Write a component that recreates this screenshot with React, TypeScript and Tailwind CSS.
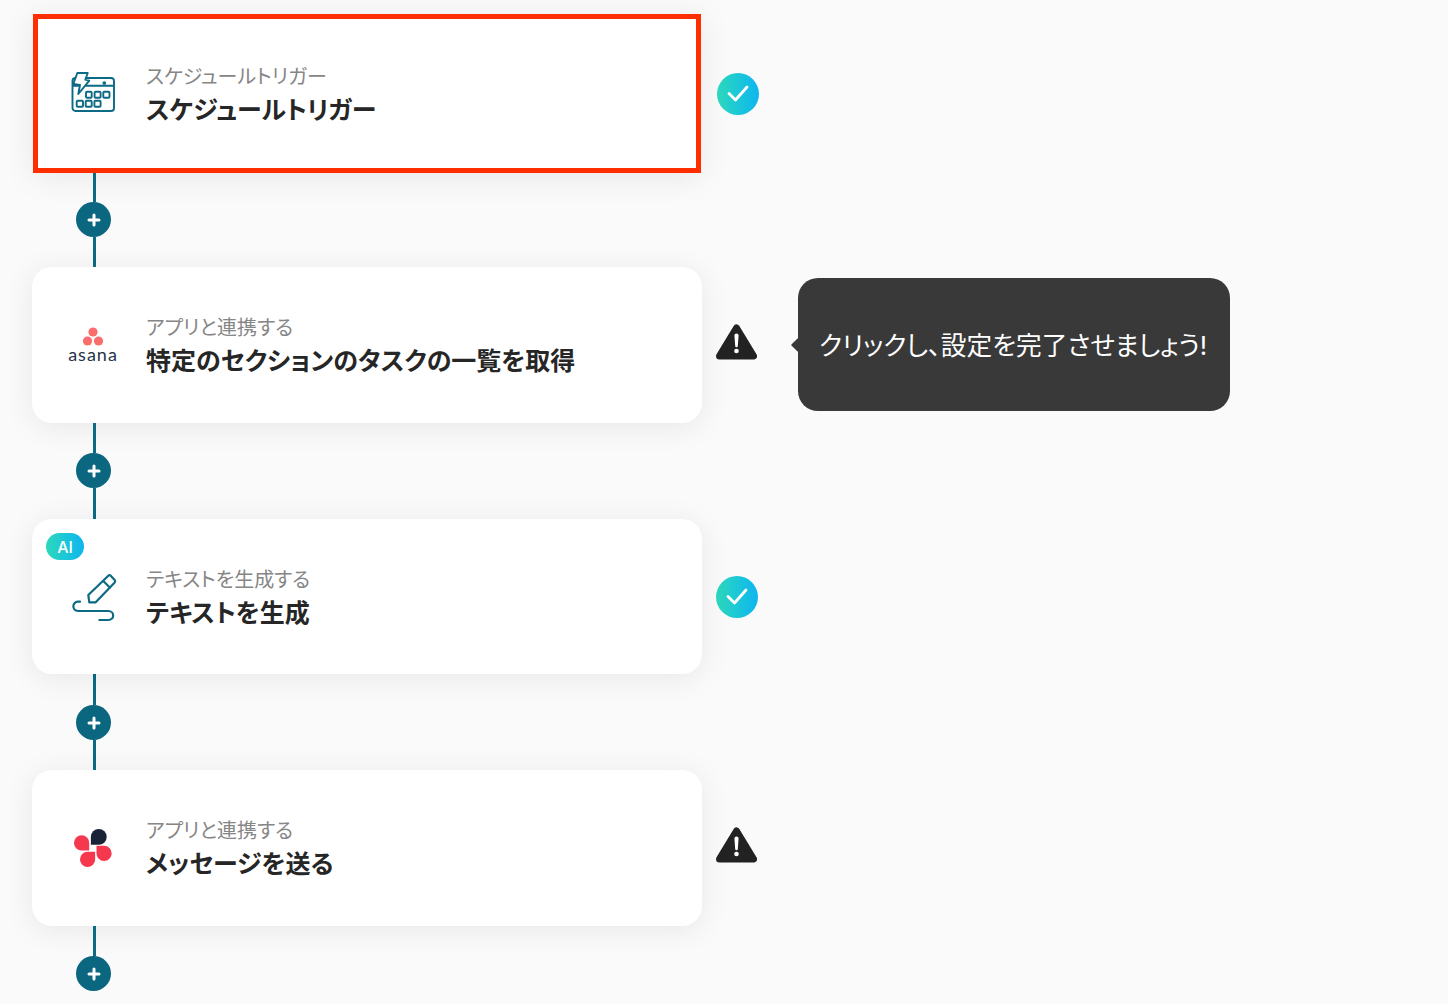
const jp = "font-['Inter','Noto_Sans_CJK_JP',sans-serif] [font-feature-settings:'palt']";

function Connector({ last = false, h, top }: { last?: boolean; h: string; top: string }) {
  return (
    <div className={`ml-[44px] flex w-[35px] flex-col items-center ${h}`}>
      <div className={`ml-px w-[3px] bg-[#0d6a85] ${top}`} />
      <div className="flex h-[35px] w-[35px] shrink-0 items-center justify-center rounded-full bg-[#0b6680]">
        <svg width="14" height="14" viewBox="0 0 14 14" fill="none" stroke="#fff" strokeWidth="3" strokeLinecap="round">
          <path d="M7 2v10M2 7h10" />
        </svg>
      </div>
      {!last && <div className="ml-px w-[3px] flex-1 bg-[#0d6a85]" />}
    </div>
  );
}

function CardText({ sub, title }: { sub: string; title: string }) {
  return (
    <div className={`ml-[28px] flex flex-col pt-[2px] ${jp}`}>
      <span className="text-[20px] leading-[28px] text-[#868686]">{sub}</span>
      <span className="mt-[2px] text-[25px] leading-[34px] font-bold text-[#262626]">{title}</span>
    </div>
  );
}

function CheckBadge() {
  return (
    <div className="flex h-[42px] w-[42px] items-center justify-center rounded-full bg-gradient-to-r from-[#2ed8bb] to-[#10b5ef]">
      <svg width="22" height="17" viewBox="0 0 22 17" fill="none" stroke="#fff" strokeWidth="2.800" strokeLinecap="round" strokeLinejoin="round">
        <path d="M2 8.500l6.500 6.500L20 2" />
      </svg>
    </div>
  );
}

function WarningBadge() {
  return (
    <svg className="mb-[6px]" width="41" height="36" viewBox="0 0 41 36">
      <path d="M20.500 4L37.500 32H3.500Z" fill="#222" stroke="#222" strokeWidth="7" strokeLinejoin="round" />
      <path d="M18.400 11.500a2.100 2.100 0 0 1 4.200 0L21.800 22a1.300 1.300 0 0 1-2.600 0Z" fill="#fff" />
      <circle cx="20.500" cy="27" r="2.300" fill="#fff" />
    </svg>
  );
}

function CalendarIcon() {
  return (
    <svg className="mb-[3px]" width="50" height="44" viewBox="0 0 50 44" fill="none" stroke="#0d6a85" strokeWidth="1.900" strokeLinejoin="round">
      <rect x="4.500" y="8" width="41.500" height="33" rx="3" />
      <path d="M5 15.700h41" />
      <circle cx="36.300" cy="13" r="0.900" fill="#0d6a85" />
      <path d="M9.300 3H19.700L17.300 9.700L21.300 10.700L10.300 24L12 15L5.300 14Z" fill="#fff" />
      <rect x="18" y="21.700" width="5.700" height="6" rx="1" />
      <rect x="26.600" y="21.700" width="6" height="6" rx="1" />
      <rect x="35.300" y="21.700" width="6.200" height="6" rx="1" />
      <rect x="8.700" y="30.700" width="6.300" height="6" rx="1" />
      <rect x="17.700" y="30.700" width="6" height="6" rx="1" />
      <rect x="26.400" y="30.700" width="6.200" height="6" rx="1" />
    </svg>
  );
}

function AsanaLogo() {
  return (
    <div className="flex flex-col items-center">
      <svg width="22" height="19" viewBox="0 0 22 19">
        <defs>
          <linearGradient id="asana-dot" x1="0" y1="0" x2="0" y2="1">
            <stop offset="0" stopColor="#fb6a78" />
            <stop offset="1" stopColor="#fb6f5f" />
          </linearGradient>
        </defs>
        <circle cx="11" cy="5" r="4.600" fill="url(#asana-dot)" />
        <circle cx="5.500" cy="14" r="4.600" fill="url(#asana-dot)" />
        <circle cx="16.500" cy="14" r="4.600" fill="url(#asana-dot)" />
      </svg>
      <span className="mt-[-2px] font-['Lato',sans-serif] text-[18px] leading-[20px] tracking-[1px] text-[#273347]">asana</span>
    </div>
  );
}

function PenIcon() {
  return (
    <svg className="mt-[3px]" width="50" height="54" viewBox="0 0 50 54" fill="none" stroke="#0d6a85" strokeWidth="2.200" strokeLinecap="round" strokeLinejoin="round">
      <path d="M21.300 31.300L20.300 24L40.300 4.700Q41.500 3.700 42.700 4.700L46.700 9Q47.700 10.200 46.700 11.400L27.700 31.300Z" />
      <path d="M35.300 10L42 16.700" />
      <path d="M12 30.700H10C3.800 30.700 3.800 40 10 40H40.300C46.800 40 46.800 49 40.300 49H31.300" />
    </svg>
  );
}

function ChatworkLogo() {
  return (
    <svg width="38" height="38" viewBox="57 43 115 115">
      <path d="M108 91V67A24 24 0 1 1 132 91Z" fill="#1a2237" />
      <path d="M103 108H80A23 23 0 1 1 103 85Z" fill="#f5384e" />
      <path d="M125 94H148A23 23 0 1 1 125 117Z" fill="#f5384e" />
      <path d="M121 112V135A23 23 0 1 1 98 112Z" fill="#f5384e" />
    </svg>
  );
}

function Tooltip() {
  return (
    <div className={`relative mb-px ml-[41px] flex h-[133px] w-[432px] items-center justify-center rounded-[20px] bg-[#393939] pt-[3px] pr-[2px] text-[25.700px] text-white ${jp}`}>
      <div className="absolute left-[-5px] top-[62px] h-[10px] w-[10px] rotate-45 rounded-[1px] bg-[#393939]" />
      クリックし、設定を完了させましょう!
    </div>
  );
}

const cardClass = "flex w-[670px] items-center rounded-[20px] bg-white pl-[36px] shadow-[0_4px_30px_rgba(0,0,0,0.08)]";
const iconBox = "flex w-[50px] shrink-0 items-center justify-center";

export default function App() {
  return (
    <div className="h-[1004px] overflow-hidden bg-[#fafafa] pl-[32px] pt-[14px]">
      <div className="flex items-center">
        <div className="ml-px flex h-[159px] w-[668px] items-center border-[5px] border-[#ff2e00] bg-white pl-[30px] shadow-[0_4px_30px_rgba(0,0,0,0.08)]">
          <div className={iconBox}><CalendarIcon /></div>
          <CardText sub="スケジュールトリガー" title="スケジュールトリガー" />
        </div>
        <div className="ml-[16px]"><CheckBadge /></div>
      </div>
      <Connector h="h-[94px]" top="h-[29px]" />

      <div className="flex items-center">
        <div className={`h-[156px] ${cardClass}`}>
          <div className={iconBox}><AsanaLogo /></div>
          <CardText sub="アプリと連携する" title="特定のセクションのタスクの一覧を取得" />
        </div>
        <div className="ml-[14px]"><WarningBadge /></div>
        <Tooltip />
      </div>
      <Connector h="h-[96px]" top="h-[30px]" />

      <div className="flex items-center">
        <div className={`relative h-[155px] ${cardClass}`}>
          <span className="absolute left-[14px] top-[14px] flex h-[27px] w-[38px] items-center justify-center rounded-full bg-gradient-to-r from-[#2ed8bb] to-[#10b5ef] font-['Inter',sans-serif] text-[16px] font-medium text-white">AI</span>
          <div className={iconBox}><PenIcon /></div>
          <CardText sub="テキストを生成する" title="テキストを生成" />
        </div>
        <div className="ml-[14px]"><CheckBadge /></div>
      </div>
      <Connector h="h-[96px]" top="h-[31px]" />

      <div className="flex items-center">
        <div className={`h-[156px] ${cardClass}`}>
          <div className={iconBox}><ChatworkLogo /></div>
          <CardText sub="アプリと連携する" title="メッセージを送る" />
        </div>
        <div className="ml-[14px]"><WarningBadge /></div>
      </div>
      <Connector h="h-[65px]" top="h-[30px]" last />
    </div>
  );
}
